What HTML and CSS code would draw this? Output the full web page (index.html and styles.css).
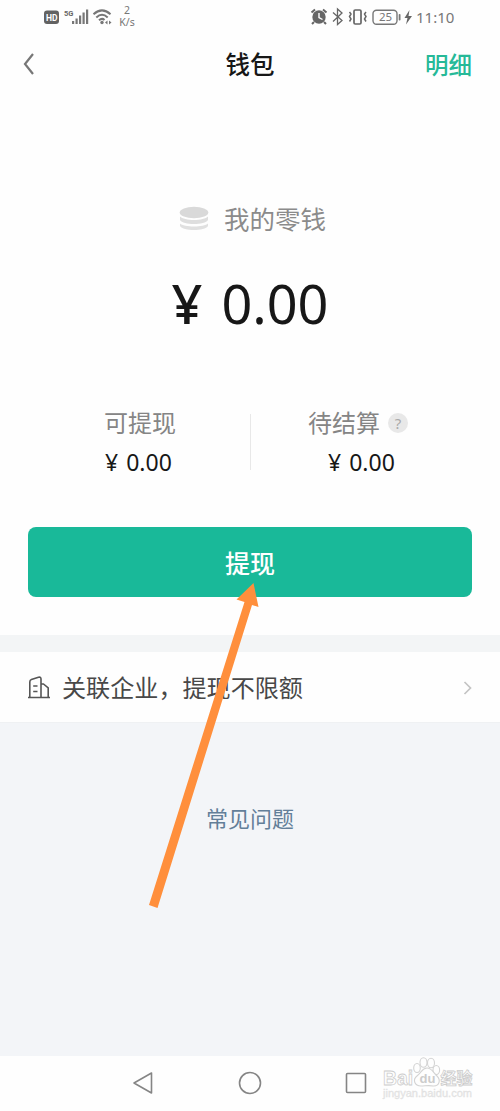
FILE: index.html
```html
<!DOCTYPE html>
<html lang="zh-CN">
<head>
<meta charset="utf-8">
<title>钱包</title>
<link rel="stylesheet" href="styles.css">
</head>
<body>
<div class="phone">
  <header class="status">
    <svg class="status-left" width="72" height="36" viewBox="42 0 72 36">
      <rect x="44" y="10.500" width="15" height="13.500" rx="3" fill="#626262"/>
      <text x="46" y="20.600" class="hd">HD</text>
      <text x="64" y="15.500" class="five">5G</text>
      <g fill="#777"><rect x="72" y="21" width="2.200" height="3"/><rect x="75.500" y="18.500" width="2.200" height="5.500"/><rect x="79" y="15.500" width="2.200" height="8.500"/><rect x="82.500" y="12.500" width="2.200" height="11.500"/><rect x="86" y="9.500" width="2.200" height="14.500"/></g>
      <g fill="none" stroke="#777" stroke-width="2"><path d="M93.500 14.200Q102 6.500 110.500 14.200M96.300 17.400Q102 12 107.700 17.400M99 20.300Q102 17.600 104.500 20"/></g>
      <circle cx="102" cy="22.500" r="1.700" fill="#777"/><path d="M105 22.500l2.500-2v4zM111.500 22.500l-2.500-2v4z" fill="#777"/>
    </svg>
    <div class="speed"><span>2</span><span>K/s</span></div>
    <svg class="status-right" width="104" height="36" viewBox="310 0 104 36">
      <circle cx="319" cy="17" r="6.700" fill="#666"/>
      <path d="M311.500 12.500l3.500-3M326.500 12.500l-3.500-3M314 22l-2 2M324 22l2 2" stroke="#666" stroke-width="2"/>
      <path d="M319 13v4.500l3.500 2" fill="none" stroke="#fff" stroke-width="1.400"/>
      <path d="M333 12.500l9 8-4.500 4V9l4.500 4-9 8.500" fill="none" stroke="#666" stroke-width="1.300"/>
      <rect x="354" y="10" width="7" height="14" rx="1.200" fill="none" stroke="#666" stroke-width="1.700"/>
      <path d="M349.500 12l1.500 2-1.500 2.500 1.500 2.500-1.500 2.500M366 12l-1.500 2 1.500 2.500-1.500 2.500 1.500 2.500" fill="none" stroke="#666" stroke-width="1.500"/>
      <rect x="373" y="10.200" width="24" height="14" rx="3.500" fill="none" stroke="#777" stroke-width="1.400"/>
      <rect x="398.700" y="14" width="1.800" height="6.500" rx=".8" fill="#777"/>
      <text x="379" y="21.200" class="battery">25</text>
      <path d="M409.500 10l-5 8h3l-1.500 6.500 6-8.500h-3.500z" fill="#666"/>
    </svg>
    <span class="clock">11:10</span>
  </header>
  <nav class="title-bar">
    <svg width="14" height="24" viewBox="0 0 14 24"><path d="M11 2L3 12l8 10" fill="none" stroke="#777" stroke-width="2.200"/></svg>
    <h1>钱包</h1>
    <a class="detail">明细</a>
  </nav>
  <main class="wallet">
    <div class="change">
      <svg width="30" height="26" viewBox="0 0 30 26"><path d="M1 18.500v2.500c3 5.300 25 5.300 28 0v-2.500c-4 4-24 4-28 0z" fill="#e0e0e0"/><path d="M1 11.500v3.500c3 5.300 25 5.300 28 0v-3.500c-4 4.600-24 4.600-28 0z" fill="#dedede"/><ellipse cx="15" cy="7.500" rx="14.300" ry="5.800" fill="#d9d9d9"/></svg>
      <span>我的零钱</span>
    </div>
    <div class="total"><span class="yen">¥</span><span>0.00</span></div>
    <div class="split">
      <section class="available"><h2>可提现</h2><p><span class="yen">¥</span><span>0.00</span></p></section>
      <section class="pending"><h2>待结算<i>?</i></h2><p><span class="yen">¥</span><span>0.00</span></p></section>
    </div>
    <button class="withdraw">提现</button>
  </main>
  <section class="company">
    <svg width="22" height="23" viewBox="0 0 22 23" fill="none" stroke="#555" stroke-width="1.600" stroke-linejoin="round"><path d="M0 21.500h22M1.800 21V6Q1.800 4.200 3.400 3.600L10.500 1.300Q13 .6 13 3v18M13 8h2.500l4.700 3.800v9.700M5.200 10H9.500M5.200 15.500H9.500"/></svg>
    <span>关联企业，提现不限额</span>
    <svg class="chevron" width="9" height="14" viewBox="0 0 9 14"><path d="M1.500 1l6 6-6 6" fill="none" stroke="#c4c4c4" stroke-width="1.700"/></svg>
  </section>
  <section class="help"><a>常见问题</a></section>
  <footer class="system-nav">
    <svg width="22" height="24" viewBox="0 0 22 24"><path d="M2 12L19.500 2v20z"/></svg>
    <svg width="24" height="24" viewBox="0 0 24 24"><circle cx="12" cy="12" r="10.500"/></svg>
    <svg width="22" height="22" viewBox="0 0 22 22"><rect x="1.500" y="1.500" width="19" height="19" rx="1"/></svg>
  </footer>
  <svg class="arrow" width="115" height="330" viewBox="145 580 115 330"><path d="M253.500 583l5 24-6.500-2-94.500 303-8.500-3L244.500 602l-8-2.500z" fill="#ff8f3c"/></svg>
  <svg class="watermark" width="98" height="46" viewBox="380 1055 98 46">
    <text x="383" y="1084.500" class="brand" textLength="30" lengthAdjust="spacingAndGlyphs">Bai</text>
    <g fill="#fefefe" stroke="#d3d3d3" stroke-width="1.100"><ellipse cx="417" cy="1068" rx="3.300" ry="4.500"/><ellipse cx="423.500" cy="1062.500" rx="3.500" ry="4.800"/><ellipse cx="431" cy="1063" rx="3.500" ry="4.800"/><ellipse cx="436.300" cy="1070" rx="3.300" ry="4.500"/><path d="M427 1068c-5 0-5.500 4.500-9.500 7.500-5.500 4-3 10.500 3.500 10.500 4 0 8-1 12 0 6.500.500 8-6 4-10-4-3.500-5-8-10-8z"/></g>
    <text x="419.500" y="1082.500" class="du">du</text>
    <text x="440.500" y="1084" class="jingyan">经验</text>
    <text x="383" y="1097" class="site" textLength="89" lengthAdjust="spacingAndGlyphs">jingyan.baidu.com</text>
  </svg>
</div>
</body>
</html>
```
FILE: styles.css
```css
* { box-sizing: border-box; }
body { margin: 0; background: #fefefe; }
.phone {
  position: relative;
  width: 500px;
  height: 1111px;
  display: flex;
  flex-direction: column;
  overflow: hidden;
  background: #fefefe;
  color: #171717;
  font-family: "Noto Sans", "AR PL UKai CN", KaiTi, "Noto Sans CJK SC", sans-serif;
}
svg { flex: none; }
h1, h2, p { margin: 0; font-weight: 400; }

.status { display: flex; height: 36px; padding-left: 42px; align-items: flex-start; color: #777; }
.speed { display: flex; flex-direction: column; width: 26px; align-items: center; padding-top: 4px; font-size: 10.500px; line-height: 12px; }
.status-right { margin-left: 170px; }
.clock { margin-left: 2px; padding-top: 5px; font-size: 15px; line-height: 24px; }
.hd { font: 700 8.500px Roboto, sans-serif; fill: #fff; }
.five { font: 700 7.500px Roboto, sans-serif; fill: #666; }
.battery { font: 11.500px "Noto Sans", sans-serif; fill: #777; }

.title-bar { display: grid; grid-template-columns: 80px 1fr 80px; height: 56px; padding: 0 28px 0 22px; align-items: center; }
.title-bar h1 { padding: 2px 0 0 6px; font-size: 24.500px; line-height: 36px; text-align: center; font-weight: 500; }
.detail { padding-top: 2px; font-size: 23.500px; line-height: 36px; color: #26b998; text-align: right; font-weight: 500; }

.wallet { display: flex; flex-direction: column; height: 543px; padding: 108px 28px 0; }
.change { display: flex; align-items: center; justify-content: center; gap: 15px; height: 38px; padding-left: 5px; font-size: 25.500px; line-height: 38px; color: #8b8b8b; }
.change svg { margin-top: -2px; }
.total { display: flex; justify-content: center; gap: 19px; height: 80px; margin-top: 25px; font-size: 54px; line-height: 80px; }
.total .yen { font-weight: 500; }
.split { display: grid; grid-template-columns: 1fr 1fr; height: 57px; margin-top: 70px; }
.split h2 { display: flex; align-items: center; height: 20px; font-size: 24px; line-height: 20px; color: #858585; }
.split p { display: flex; gap: 8px; height: 36px; margin-top: 11px; font-size: 23px; line-height: 36px; }
.available { position: relative; padding-left: 76px; }
.available::after { content: ""; position: absolute; right: -1px; top: 1px; width: 1px; height: 56px; background: #e8e8e8; }
.available p { padding-left: 1px; }
.pending { padding-left: 58px; }
.pending p { padding-left: 20px; }
.split i { width: 20px; height: 20px; margin-left: 8px; border-radius: 50%; background: #e8e8e8; color: #aaa; font-size: 15px; font-style: normal; text-align: center; }
.withdraw { flex: none; height: 70px; margin-top: 57px; padding: 0; border: 0; border-radius: 8px; background: #19b999; color: #fff; font: 500 25px/70px "AR PL UKai CN", KaiTi, "Noto Sans CJK SC", sans-serif; }

.company { display: flex; align-items: center; height: 88px; padding: 0 28px; border-top: 17px solid #f3f5f6; border-bottom: 1px solid #eff1f3; font-size: 24.100px; line-height: 36px; color: #484848; }
.company span { margin: 2px 0 0 12px; }
.chevron { margin: 1px 0 0 auto; }
.help { height: 333px; padding-top: 79px; background: #f3f5f8; text-align: center; color: #637f99; font-size: 22px; line-height: 32px; }

.system-nav { display: grid; grid-template-columns: 22px 24px 22px; column-gap: 83px; height: 54px; padding-left: 132px; align-items: center; fill: none; stroke: #858585; stroke-width: 1.600; stroke-linejoin: round; }
.system-nav svg + svg { margin-left: 1px; }
.arrow { position: absolute; left: 145px; top: 580px; }
.watermark { position: absolute; left: 380px; top: 1055px; fill: #fefefe; stroke: #ccc; stroke-width: .8; }
.brand { font: 700 21px "Liberation Sans", sans-serif; }
.du { font: 700 13px "Liberation Sans", sans-serif; fill: #ccc; stroke: none; }
.jingyan { font: 700 16px "Noto Sans CJK SC", sans-serif; }
.site { font: 11px "Liberation Sans", sans-serif; fill: #e6e6e6; stroke: #e0e0e0; stroke-width: .3; }
```
